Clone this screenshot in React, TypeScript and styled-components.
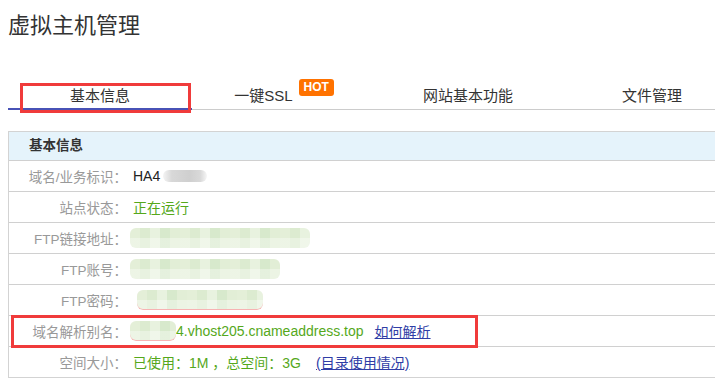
import React from "react";
import styled, { createGlobalStyle } from "styled-components";

const GlobalStyle = createGlobalStyle`
    html, body {
        margin: 0;
        padding: 0;
        background: #fff;
        overflow: hidden;
    }
    body {
        font-family: "Liberation Sans", "Noto Sans CJK SC", sans-serif;
        color: #333;
    }
`;

const Page = styled.div`
    width: 715px;
    height: 387px;
    padding-left: 8px;
    box-sizing: border-box;
    overflow: hidden;
`;

const Title = styled.h1`
    margin: 0;
    padding-top: 14px;
    font-size: 22px;
    line-height: 24px;
    font-weight: normal;
    color: #333;
    white-space: nowrap;
`;

const TabBar = styled.div`
    display: flex;
    margin-top: 42px;
    width: 760px;
    border-bottom: 1px solid #cccccc;
`;

const Tab = styled.div<{ $active?: boolean }>`
    position: relative;
    flex: 0 0 184px;
    display: flex;
    justify-content: center;
    align-items: center;
    height: ${(p) => (p.$active ? "28px" : "29px")};
    margin-bottom: ${(p) => (p.$active ? "-1px" : "0")};
    border-bottom: ${(p) => (p.$active ? "2px solid #4852b6" : "none")};
    font-size: 15px;
    color: #333;
    white-space: nowrap;
`;

const Hot = styled.span`
    margin-left: 6px;
    padding: 0 5px;
    height: 17px;
    line-height: 17px;
    border-radius: 3px;
    background: #ff7200;
    color: #fff;
    font-size: 12px;
    font-weight: bold;
    transform: translateY(-7px);
`;

const Mark = styled.div<{ $l: number; $t: number; $w: number; $h: number }>`
    position: absolute;
    left: ${(p) => p.$l}px;
    top: ${(p) => p.$t}px;
    width: ${(p) => p.$w}px;
    height: ${(p) => p.$h}px;
    border: 3px solid #f03b3b;
    box-sizing: border-box;
    pointer-events: none;
`;

const Table = styled.div`
    margin-top: 21px;
    width: 740px;
    border: 1px solid #d3d3d3;
    border-right: none;
`;

const Head = styled.div`
    height: 28px;
    line-height: 28px;
    padding-left: 20px;
    background: #e5f3fb;
    border-bottom: 1px solid #d0d0d0;
    font-size: 13.5px;
    font-weight: bold;
    color: #333;
`;

const Row = styled.div<{ $last?: boolean }>`
    position: relative;
    display: flex;
    align-items: center;
    height: 30px;
    border-bottom: ${(p) => (p.$last ? "none" : "1px solid #d0d0d0")};
`;

const Label = styled.div`
    flex: 0 0 118px;
    padding-right: 2px;
    text-align: right;
    font-size: 13.5px;
    color: #999;
    white-space: nowrap;
`;

const Value = styled.div`
    display: flex;
    align-items: center;
    padding-left: 4px;
    font-size: 14px;
    white-space: nowrap;
`;

const Text = styled.span<{ $tone?: "dark" | "green" }>`
    color: ${(p) => (p.$tone === "green" ? "#55a81b" : "#222")};
`;

const Link = styled.a<{ $gap: number }>`
    margin-left: ${(p) => p.$gap}px;
    color: #2f3da6;
    text-decoration: underline;
    cursor: pointer;
`;

const Blur = styled.span<{ $w: number; $h?: number; $tone?: "green" | "gray"; $line?: boolean; $shift?: number }>`
    display: inline-block;
    width: ${(p) => p.$w}px;
    height: ${(p) => p.$h ?? 20}px;
    margin-left: ${(p) => p.$shift ?? -3}px;
    border-radius: 6px;
    background: ${(p) =>
        p.$tone === "gray"
            ? "linear-gradient(90deg, #f4f4f4 0%, #d8d8d8 20%, #cfcfcf 60%, #d9d9d9 85%, #f6f6f6 100%)"
            : "linear-gradient(180deg, rgba(255,255,255,0) 50%, rgba(255,255,255,0.35) 50%), repeating-linear-gradient(90deg, #e4efd8 0 10px, #dcebd0 10px 20px, #e8f2df 20px 30px, #d7e9cc 30px 40px, #e2eed6 40px 50px)"};
    box-shadow: ${(p) => (p.$line ? "inset 0 -1px 0 #f7b3b3" : "none")};
    filter: blur(0.6px);
`;

const App: React.FC = () => {
    return (
        <>
            <GlobalStyle />
            <Page>
                <Title>虚拟主机管理</Title>
                <TabBar>
                    <Tab $active>
                        基本信息
                        <Mark $l={12} $t={3} $w={171} $h={30} />
                    </Tab>
                    <Tab>
                        一键SSL
                        <Hot>HOT</Hot>
                    </Tab>
                    <Tab>网站基本功能</Tab>
                    <Tab>文件管理</Tab>
                </TabBar>

                <Table>
                    <Head>基本信息</Head>
                    <Row>
                        <Label>域名/业务标识：</Label>
                        <Value>
                            <Text>HA4</Text>
                            <Blur $tone="gray" $w={44} $h={12} $shift={3} />
                        </Value>
                    </Row>
                    <Row>
                        <Label>站点状态：</Label>
                        <Value>
                            <Text $tone="green">正在运行</Text>
                        </Value>
                    </Row>
                    <Row>
                        <Label>FTP链接地址：</Label>
                        <Value>
                            <Blur $w={180} />
                        </Value>
                    </Row>
                    <Row>
                        <Label>FTP账号：</Label>
                        <Value>
                            <Blur $w={150} />
                        </Value>
                    </Row>
                    <Row>
                        <Label>FTP密码：</Label>
                        <Value>
                            <Blur $w={126} $line $shift={4} />
                        </Value>
                    </Row>
                    <Row>
                        <Label>域名解析别名：</Label>
                        <Value>
                            <Blur $w={46} $line />
                            <Text $tone="green">4.vhost205.cnameaddress.top</Text>
                            <Link $gap={11}>如何解析</Link>
                        </Value>
                        <Mark $l={2} $t={-1} $w={467} $h={33} />
                    </Row>
                    <Row $last>
                        <Label>空间大小：</Label>
                        <Value>
                            <Text $tone="green">已使用：1M ，总空间：3G</Text>
                            <Link $gap={15}>(目录使用情况)</Link>
                        </Value>
                    </Row>
                </Table>
            </Page>
        </>
    );
};

export default App;
